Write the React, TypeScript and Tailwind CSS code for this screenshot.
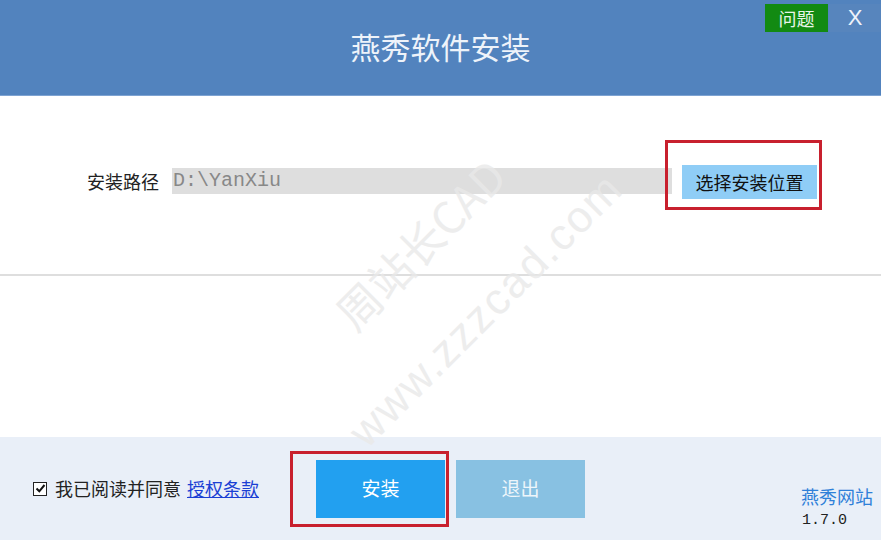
import React from "react";

const cjk = { fontFamily: '"Noto Sans CJK SC", "Noto Sans", sans-serif' };
const mono = { fontFamily: '"Liberation Mono", "DejaVu Sans Mono", monospace' };

export default function App() {
  return (
    <div className="relative w-[881px] h-[540px] overflow-hidden bg-white flex flex-col" style={cjk}>
      {/* Header */}
      <div className="relative h-[96px] shrink-0 bg-[#5283be] border-b border-[#7ea3d2] flex items-center justify-center">
        <div className="text-[30px] text-[#eef3fa] -mt-[3px]">燕秀软件安装</div>
        <div className="absolute right-0 top-[4px] flex h-[28px]">
          <div className="w-[63px] bg-[#128a12] text-[#e8f5e8] text-[18px] flex items-center justify-center leading-none">问题</div>
          <div className="w-[52px] ml-[1px] bg-[#5785bd] text-[#eef3fa] text-[22px] flex items-center justify-center leading-none" style={{ fontFamily: '"Liberation Sans", sans-serif' }}>X</div>
        </div>
      </div>

      {/* Main */}
      <div className="flex-1 flex flex-col">
        <div className="h-[178px] flex items-start">
          <div className="ml-[87px] mt-[70px] w-[85px] text-[18px] leading-[30px] text-[#222]">安装路径</div>
          <div className="mt-[72px] w-[500px] h-[26px] bg-[#dedede] flex items-center pl-[1px] text-[20px] text-[#888]" style={mono}>D:\YanXiu</div>
          <div className="ml-[-7px] mt-[44px] w-[157px] h-[70px] border-[3px] border-[#c8202e] flex items-start">
            <div className="ml-[14px] mt-[22px] w-[135px] h-[34px] bg-[#8fcdf6] text-[18px] text-[#111] flex items-center justify-center">选择安装位置</div>
          </div>
        </div>
        <div className="h-[2px] bg-[#dedede]" />
      </div>

      {/* Footer */}
      <div className="h-[103px] shrink-0 bg-[#e9eff8] flex items-center">
        <div className="ml-[33px] flex items-center">
          <div className="w-[14px] h-[14px] border-[1.5px] border-[#222] bg-white flex items-center justify-center">
            <svg width="11" height="11" viewBox="0 0 11 11">
              <path d="M1.5 5.5 L4.3 8.3 L9.5 2" fill="none" stroke="#111" strokeWidth="2" />
            </svg>
          </div>
          <span className="ml-[8px] text-[18px] text-[#222]">我已阅读并同意</span>
          <span className="ml-[6px] text-[18px] text-[#1a3fd4] underline">授权条款</span>
        </div>
        <div className="ml-[31px] w-[159px] h-[76px] border-[3px] border-[#c8202e] flex items-center">
          <div className="ml-[23px] w-[129px] h-[58px] bg-[#22a0f0] text-white text-[19px] flex items-center justify-center">安装</div>
        </div>
        <div className="ml-[7px] w-[129px] h-[58px] bg-[#88c1e2] text-[#eef6fb] text-[19px] flex items-center justify-center">退出</div>
        <div className="ml-auto mr-[8px] self-stretch flex flex-col justify-end items-start pb-[9px]">
          <span className="text-[18px] text-[#2f80d8] leading-[22px]">燕秀网站</span>
          <span className="text-[15px] text-[#222] leading-[20px] mt-[4px] ml-[1px]" style={mono}>1.7.0</span>
        </div>
      </div>

      {/* Watermark */}
      <div
        className="pointer-events-none absolute left-[261px] top-[185px] w-[380px] h-[180px] -rotate-45 text-center text-[44px] leading-[90px] text-[#e9e9e9] whitespace-nowrap opacity-80"
        style={cjk}
      >
        周站长CAD
        <br />
        <span className="tracking-[2px]" style={{ fontFamily: '"Liberation Sans", sans-serif' }}>www.zzzcad.com</span>
      </div>
    </div>
  );
}
